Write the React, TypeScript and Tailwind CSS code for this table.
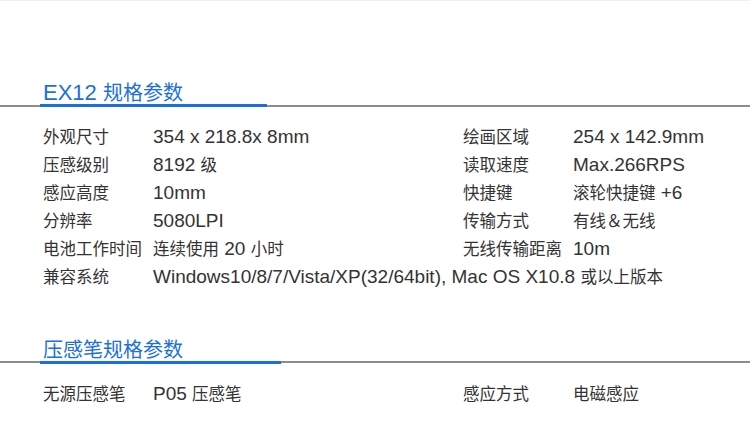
import React from "react";

const CJK = /[\u3000-\u9fff\uff00-\uffef]/;

const latinCls = "font-['Liberation_Sans',Arial,sans-serif] text-[19px]";
const cjkCls = "font-['Noto_Sans_CJK_SC',sans-serif] text-[16.5px]";

// latin runs are drawn a bit larger than the chinese runs, as in the picture
function Mixed({ text, latin = latinCls, cjk = cjkCls }: { text: string; latin?: string; cjk?: string }) {
    const parts = text.split(/([\u3000-\u9fff\uff00-\uffef]+)/);
    return (
        <span className="whitespace-pre">
            {parts.map((p, i) =>
                p ? (
                    <span key={i} className={CJK.test(p) ? cjk : latin}>
                        {p}
                    </span>
                ) : null
            )}
        </span>
    );
}

type Row = { label: string; value: string; label2?: string; value2?: string };

const ex12Rows: Row[] = [
    { label: "外观尺寸", value: "354 x 218.8x 8mm", label2: "绘画区域", value2: "254 x 142.9mm" },
    { label: "压感级别", value: "8192 级", label2: "读取速度", value2: "Max.266RPS" },
    { label: "感应高度", value: "10mm", label2: "快捷键", value2: "滚轮快捷键 +6" },
    { label: "分辨率", value: "5080LPI", label2: "传输方式", value2: "有线＆无线" },
    { label: "电池工作时间", value: "连续使用 20 小时", label2: "无线传输距离", value2: "10m" },
    { label: "兼容系统", value: "Windows10/8/7/Vista/XP(32/64bit), Mac OS X10.8 或以上版本" },
];

const penRows: Row[] = [
    { label: "无源压感笔", value: "P05 压感笔", label2: "感应方式", value2: "电磁感应" },
];

function SectionHeader({ title, barClass }: { title: string; barClass: string }) {
    return (
        <div className="border-b-2 border-[#8c8c8c]">
            <div className={`ml-[40px] h-[26px] pl-[3px] flex items-center leading-none text-[#1c6fe3] border-b-[3px] border-[#1c6fe3] mb-[-2.5px] ${barClass}`}>
                <Mixed
                    text={title}
                    latin="font-['Liberation_Sans',Arial,sans-serif] text-[22px]"
                    cjk="font-['Noto_Sans_CJK_SC',sans-serif] text-[20px]"
                />
            </div>
        </div>
    );
}

function SpecGrid({ rows }: { rows: Row[] }) {
    return (
        <div className="grid grid-cols-[110px_310px_110px_1fr] pl-[43px] pt-[16px] text-[#333333]">
            {rows.map((r, i) => (
                <React.Fragment key={i}>
                    <div className="h-[28px] flex items-center">
                        <Mixed text={r.label} />
                    </div>
                    <div className={`h-[28px] flex items-center ${r.label2 ? "" : "col-span-3"}`}>
                        <Mixed text={r.value} />
                    </div>
                    {r.label2 && (
                        <>
                            <div className="h-[28px] flex items-center">
                                <Mixed text={r.label2} />
                            </div>
                            <div className="h-[28px] flex items-center">
                                <Mixed text={r.value2 || ""} />
                            </div>
                        </>
                    )}
                </React.Fragment>
            ))}
        </div>
    );
}

export default function App() {
    return (
        <div className="w-[750px] h-[442px] bg-white border-t border-[#f0f0f0] overflow-hidden leading-none">
            <div className="pt-[80px]">
                <SectionHeader title="EX12 规格参数" barClass="w-[227px]" />
                <SpecGrid rows={ex12Rows} />
            </div>
            <div className="mt-[47px]">
                <SectionHeader title="压感笔规格参数" barClass="w-[241px]" />
                <SpecGrid rows={penRows} />
            </div>
        </div>
    );
}
